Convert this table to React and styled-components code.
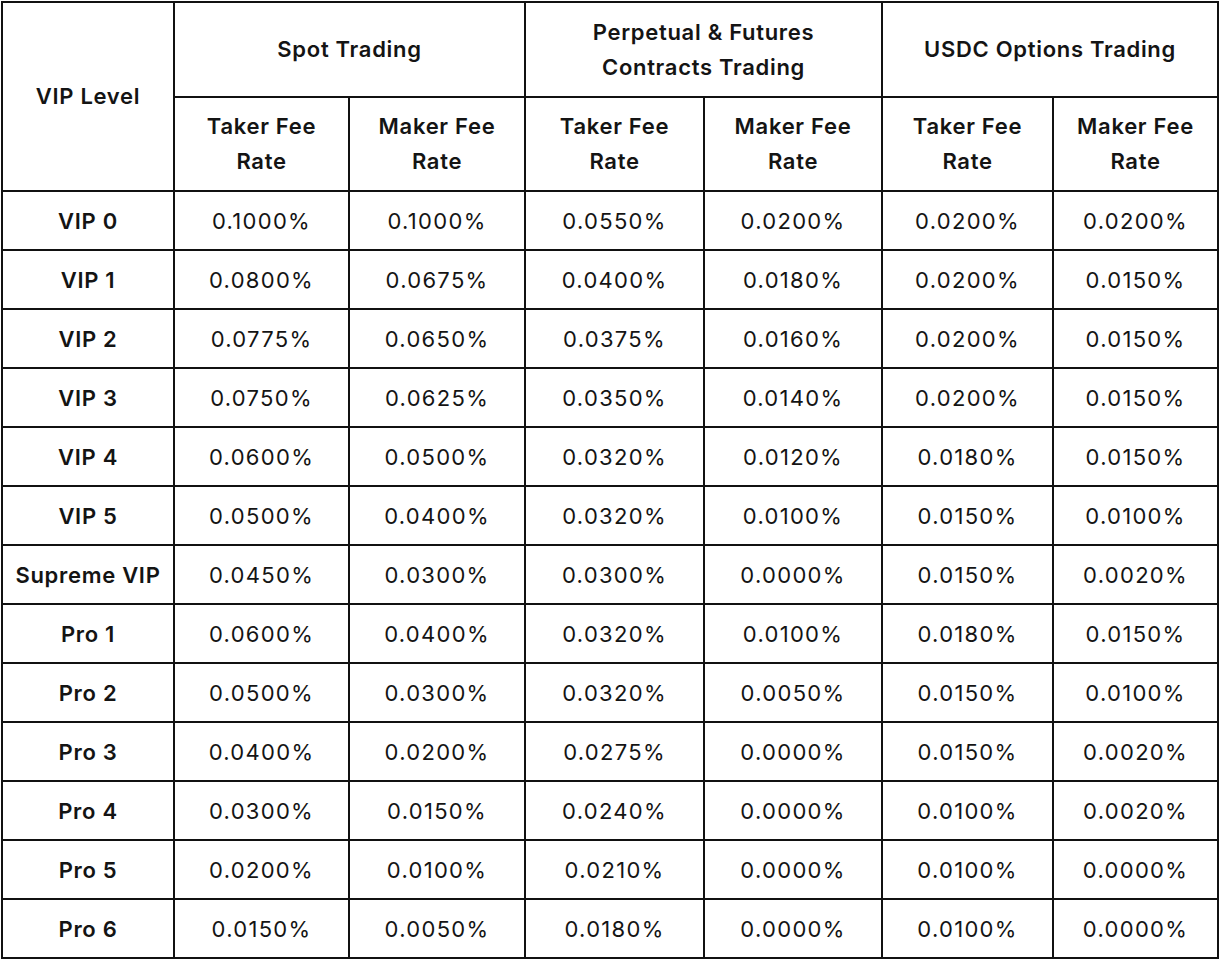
import React from "react";
import styled, { createGlobalStyle } from "styled-components";

const Global = createGlobalStyle`
  html, body { margin: 0; padding: 0; background: #fff; }
  body { font-family: "Inter", "Noto Sans", sans-serif; color: #141414; }
`;

const Wrap = styled.div`
  padding: 1px 0 0 1px;
`;

const Table = styled.table`
  border-collapse: collapse;
  table-layout: fixed;
  width: 1216px;
  font-size: 22px;
  letter-spacing: 0.7px;
`;

const HeadCell = styled.th`
  border: 2px solid #111;
  font-weight: 600;
  text-align: center;
  vertical-align: middle;
  line-height: 35px;
  height: ${(p) => p.$h}px;
  padding: 0 4px;
  box-sizing: border-box;
`;

const RowHead = styled.td`
  border: 2px solid #111;
  font-weight: 600;
  text-align: center;
  height: 57px;
  padding: 0 2px;
  white-space: nowrap;
`;

const Cell = styled.td`
  border: 2px solid #111;
  font-weight: 400;
  text-align: center;
  height: 57px;
  padding: 0;
  letter-spacing: 1.3px;
`;

const widths = [172, 175, 176, 179, 178, 171, 165];

const rows = [
  ["VIP 0", "0.1000%", "0.1000%", "0.0550%", "0.0200%", "0.0200%", "0.0200%"],
  ["VIP 1", "0.0800%", "0.0675%", "0.0400%", "0.0180%", "0.0200%", "0.0150%"],
  ["VIP 2", "0.0775%", "0.0650%", "0.0375%", "0.0160%", "0.0200%", "0.0150%"],
  ["VIP 3", "0.0750%", "0.0625%", "0.0350%", "0.0140%", "0.0200%", "0.0150%"],
  ["VIP 4", "0.0600%", "0.0500%", "0.0320%", "0.0120%", "0.0180%", "0.0150%"],
  ["VIP 5", "0.0500%", "0.0400%", "0.0320%", "0.0100%", "0.0150%", "0.0100%"],
  ["Supreme VIP", "0.0450%", "0.0300%", "0.0300%", "0.0000%", "0.0150%", "0.0020%"],
  ["Pro 1", "0.0600%", "0.0400%", "0.0320%", "0.0100%", "0.0180%", "0.0150%"],
  ["Pro 2", "0.0500%", "0.0300%", "0.0320%", "0.0050%", "0.0150%", "0.0100%"],
  ["Pro 3", "0.0400%", "0.0200%", "0.0275%", "0.0000%", "0.0150%", "0.0020%"],
  ["Pro 4", "0.0300%", "0.0150%", "0.0240%", "0.0000%", "0.0100%", "0.0020%"],
  ["Pro 5", "0.0200%", "0.0100%", "0.0210%", "0.0000%", "0.0100%", "0.0000%"],
  ["Pro 6", "0.0150%", "0.0050%", "0.0180%", "0.0000%", "0.0100%", "0.0000%"],
];

const RateHead = ({ kind }) => (
  <>
    {kind} Fee
    <br />
    Rate
  </>
);

export default function App() {
  return (
    <>
      <Global />
      <Wrap>
        <Table>
          <colgroup>
            {widths.map((w, i) => (
              <col key={i} style={{ width: w }} />
            ))}
          </colgroup>
          <thead>
            <tr>
              <HeadCell rowSpan={2}>VIP Level</HeadCell>
              <HeadCell colSpan={2} $h={95}>Spot Trading</HeadCell>
              <HeadCell colSpan={2} $h={95}>
                Perpetual &amp; Futures
                <br />
                Contracts Trading
              </HeadCell>
              <HeadCell colSpan={2} $h={95}>USDC Options Trading</HeadCell>
            </tr>
            <tr>
              <HeadCell $h={94}><RateHead kind="Taker" /></HeadCell>
              <HeadCell $h={94}><RateHead kind="Maker" /></HeadCell>
              <HeadCell $h={94}><RateHead kind="Taker" /></HeadCell>
              <HeadCell $h={94}><RateHead kind="Maker" /></HeadCell>
              <HeadCell $h={94}><RateHead kind="Taker" /></HeadCell>
              <HeadCell $h={94}><RateHead kind="Maker" /></HeadCell>
            </tr>
          </thead>
          <tbody>
            {rows.map((r) => (
              <tr key={r[0]}>
                <RowHead>{r[0]}</RowHead>
                {r.slice(1).map((v, i) => (
                  <Cell key={i}>{v}</Cell>
                ))}
              </tr>
            ))}
          </tbody>
        </Table>
      </Wrap>
    </>
  );
}
